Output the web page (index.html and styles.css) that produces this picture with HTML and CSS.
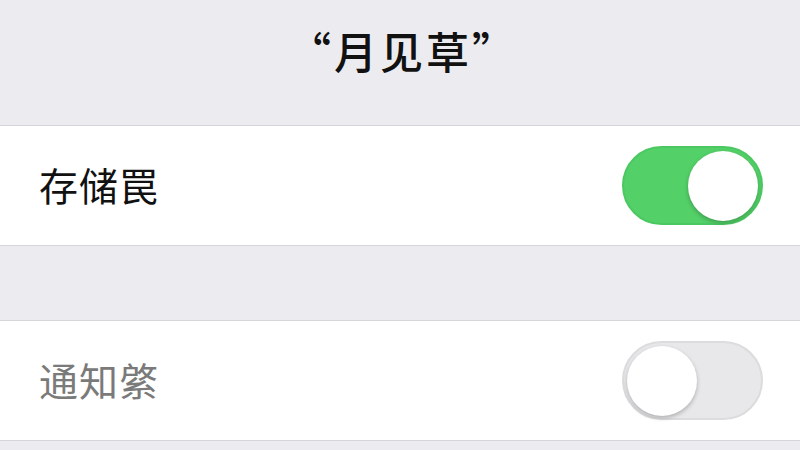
FILE: index.html
```html
<!DOCTYPE html>
<html lang="zh-CN">
<head>
  <meta charset="UTF-8">
  <meta name="viewport" content="width=device-width, initial-scale=1.0">
  <title>月见草</title>
  <link rel="stylesheet" href="styles.css">
</head>
<body>
  <div class="screen">
    <div class="header">
      <h1>“月见草”</h1>
    </div>

    <div class="group">
      <div class="row">
        <span class="label">存储罠</span>
        <div class="switch on"><div class="knob"></div></div>
      </div>
    </div>

    <div class="spacer"></div>

    <div class="group">
      <div class="row">
        <span class="label dim">通知綮</span>
        <div class="switch"><div class="knob"></div></div>
      </div>
    </div>
  </div>
</body>
</html>
```

FILE: styles.css
```css
body {
  margin: 0;
  background-color: #ececf0;
  font-family: "Noto Sans CJK SC", "Noto Sans", sans-serif;
}

.screen {
  width: 800px;
  height: 450px;
  overflow: hidden;
}

.header {
  height: 125px;
  display: flex;
  justify-content: center;
  align-items: center;
}

.header h1 {
  margin: 0 0 26px 6px;
  font-size: 43px;
  font-weight: 500;
  color: #111;
  letter-spacing: 3px;
}

.group {
  background-color: #fff;
  border-top: 1px solid #d6d6da;
  border-bottom: 1px solid #d6d6da;
}

.row {
  height: 119px;
  display: flex;
  align-items: center;
  justify-content: space-between;
  padding: 0 37px 0 39px;
}

.label {
  font-size: 39px;
  color: #111;
  letter-spacing: 1px;
  margin-bottom: 4px;
}

.label.dim {
  color: #7a7a7a;
}

.spacer {
  height: 74px;
}

.switch {
  width: 141px;
  height: 79px;
  border-radius: 40px;
  box-sizing: border-box;
  background-color: #e8e8ea;
  border: 2px solid #dcdcde;
  display: flex;
  align-items: center;
  padding: 0 3px;
}

.switch.on {
  background-color: #53d068;
  border-color: #4cc862;
  justify-content: flex-end;
}

.knob {
  width: 70px;
  height: 70px;
  border-radius: 50%;
  background-color: #fff;
  box-shadow: 0 2px 4px rgba(0, 0, 0, 0.25);
}
```
